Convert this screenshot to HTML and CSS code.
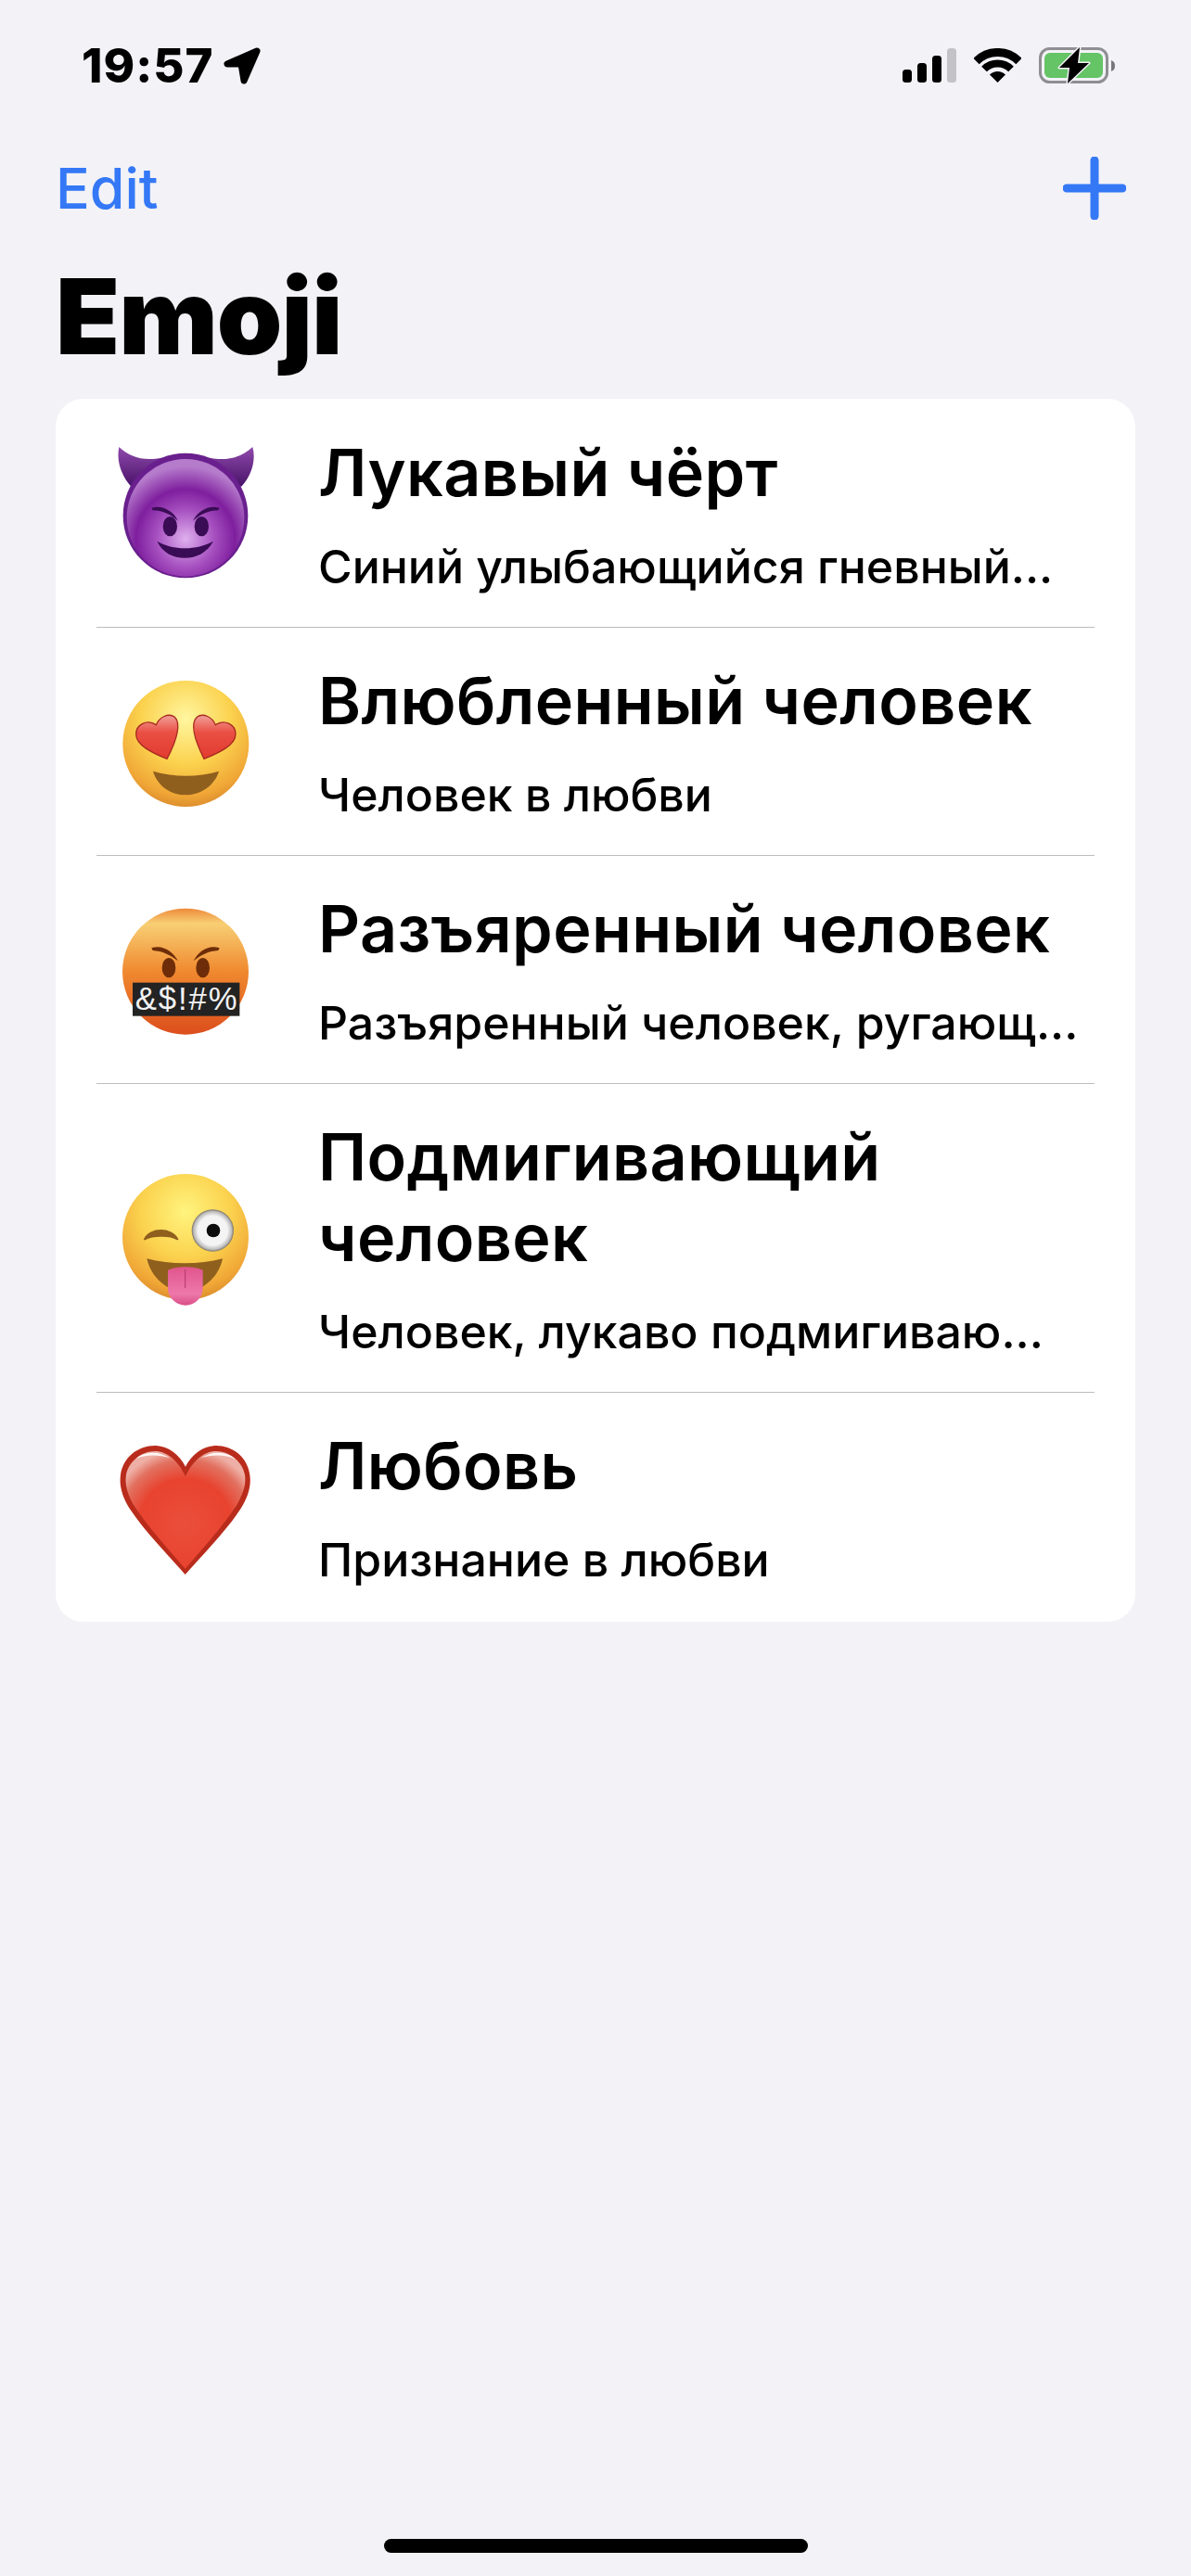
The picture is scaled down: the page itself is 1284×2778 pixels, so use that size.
FILE: index.html
```html
<!DOCTYPE html>
<html lang="en">
<head>
  <meta charset="UTF-8" />
  <title>Emoji</title>
  <link rel="stylesheet" href="styles.css">
</head>
<body>
  <div class="page">
    <div class="statusbar">
      <div class="status-left">
        <span class="time">19:57</span>
        <svg class="arrow" width="42" height="42" viewBox="0 0 42 42"><path d="M37 5 L5 19 H20 L23 37 Z" fill="#000" stroke="#000" stroke-width="7" stroke-linejoin="round"/></svg>
      </div>
      <div class="status-right">
        <svg width="58" height="38" viewBox="0 0 58 38">
          <rect x="0" y="23" width="10" height="14" rx="3.5" fill="#000"/>
          <rect x="16" y="16" width="10" height="21" rx="3.5" fill="#000"/>
          <rect x="32" y="8" width="10" height="29" rx="3.5" fill="#000"/>
          <rect x="48" y="0" width="10" height="37" rx="3.5" fill="#c2c2c7"/>
        </svg>
        <svg width="51" height="38" viewBox="0 0 51 38" fill="none" stroke="#000">
          <path d="M2.5 14 A32.5 32.5 0 0 1 48.5 14" stroke-width="9"/>
          <path d="M11 22.5 A20.5 20.5 0 0 1 40 22.5" stroke-width="8"/>
          <path d="M25.5 37 L17 28.5 A12 12 0 0 1 34 28.5 Z" fill="#000" stroke="none"/>
        </svg>
        <svg class="battery" width="82" height="42" viewBox="0 0 82 42">
          <rect x="1.5" y="2.5" width="72" height="36" rx="10" fill="none" stroke="#8e8e93" stroke-width="3"/>
          <rect x="6" y="7" width="63" height="27" rx="6" fill="#65c466"/>
          <path d="M78 15 C81 16 82 18 82 21 C82 24 81 26 78 27 Z" fill="#77777c"/>
          <path d="M44 1 L22 23 H33 L31 40 L54 18 H42 Z" fill="#000" stroke="#f2f2f7" stroke-width="3" stroke-linejoin="round" paint-order="stroke"/>
        </svg>
      </div>
    </div>

    <div class="navbar">
      <span class="edit">Edit</span>
      <svg width="68" height="68" viewBox="0 0 68 68"><path d="M34 4 V64 M4 34 H64" stroke="#3478f6" stroke-width="9" stroke-linecap="round"/></svg>
    </div>

    <h1 class="page-title">Emoji</h1>

    <div class="card">
      <div class="row">
        <svg class="emoji" viewBox="0 9 660 600">
          <defs>
            <linearGradient id="hornFill" x1="0" y1="0" x2="0" y2="1">
              <stop offset="0" stop-color="#8f4aac"/><stop offset="1" stop-color="#481268"/>
            </linearGradient>
            <radialGradient id="devilFace" cx="50%" cy="68%" r="62%">
              <stop offset="0" stop-color="#dfb0ee"/><stop offset=".4" stop-color="#a650c0"/><stop offset=".68" stop-color="#7f1f9e"/><stop offset="1" stop-color="#b67ccc"/>
            </radialGradient>
          </defs>
          <path d="M85 93 C120 125 160 140 225 128 L125 222 C95 190 75 140 85 93 Z" fill="url(#hornFill)"/>
          <path d="M517 93 C482 125 440 140 375 128 L480 222 C510 190 530 140 517 93 Z" fill="url(#hornFill)"/>
          <circle cx="300" cy="315" r="202" fill="#6a1f8e"/>
          <circle cx="300" cy="322" r="190" fill="url(#devilFace)"/>
          <path d="M190 290 C225 280 260 300 276 332 C250 310 225 298 194 298 Z" fill="#3a0c55"/>
          <path d="M410 290 C375 280 340 300 324 332 C350 310 375 298 406 298 Z" fill="#3a0c55"/>
          <ellipse cx="250" cy="350" rx="23" ry="32" fill="#3a0c55"/>
          <ellipse cx="352" cy="350" rx="23" ry="32" fill="#3a0c55"/>
          <path d="M208 398 C260 428 335 428 390 398 C370 435 335 452 298 452 C260 452 225 435 208 398 Z" fill="#3a0c55"/>
        </svg>
        <div class="row-text">
          <div class="row-title">Лукавый чёрт</div>
          <div class="row-sub">Синий улыбающийся гневный...</div>
        </div>
      </div>
      <div class="sep"></div>

      <div class="row">
        <svg class="emoji" viewBox="0 -30 660 600">
          <defs>
            <radialGradient id="yellowFace" cx="50%" cy="30%" r="72%">
              <stop offset="0" stop-color="#fff6a0"/><stop offset=".5" stop-color="#fbd24e"/><stop offset=".85" stop-color="#f0a636"/><stop offset="1" stop-color="#d98a2c"/>
            </radialGradient>
            <linearGradient id="eyeHeart" x1="0" y1="0" x2="0" y2="1">
              <stop offset="0" stop-color="#f0a09a"/><stop offset=".4" stop-color="#ea4e42"/><stop offset="1" stop-color="#e23b30"/>
            </linearGradient>
          </defs>
          <circle cx="301" cy="276" r="204" fill="url(#yellowFace)"/>
          <path d="M240 325 C190 305 140 280 140 245 C140 215 175 195 205 215 C215 190 245 175 265 190 C285 210 275 260 240 325 Z" fill="url(#eyeHeart)" stroke="#a82a20" stroke-width="4"/>
          <path d="M360 325 C410 305 462 280 462 245 C462 215 427 195 397 215 C387 190 357 175 337 190 C317 210 327 260 360 325 Z" fill="url(#eyeHeart)" stroke="#a82a20" stroke-width="4"/>
          <path d="M195 365 C265 385 340 385 408 365 C395 410 350 442 300 442 C250 442 208 410 195 365 Z" fill="#8f5f1e"/>
        </svg>
        <div class="row-text">
          <div class="row-title">Влюбленный человек</div>
          <div class="row-sub">Человек в любви</div>
        </div>
      </div>
      <div class="sep"></div>

      <div class="row">
        <svg class="emoji" viewBox="0 -39 660 600">
          <defs>
            <linearGradient id="angryFace" x1="0" y1="0" x2="0" y2="1">
              <stop offset="0" stop-color="#ee8a3a"/><stop offset=".12" stop-color="#f8cf74"/><stop offset=".5" stop-color="#f0892f"/><stop offset="1" stop-color="#dc4e1c"/>
            </linearGradient>
          </defs>
          <circle cx="300" cy="266" r="204" fill="url(#angryFace)"/>
          <path d="M190 190 C225 178 258 200 276 232 C250 212 225 200 194 198 Z" fill="#6e2d08"/>
          <path d="M410 190 C375 178 342 200 326 232 C350 212 375 200 406 198 Z" fill="#6e2d08"/>
          <ellipse cx="246" cy="254" rx="22" ry="32" fill="#6e2d08"/>
          <ellipse cx="356" cy="254" rx="22" ry="32" fill="#6e2d08"/>
          <rect x="129" y="302" width="346" height="108" fill="#232323"/>
          <text class="grawlix" x="302" y="391" text-anchor="middle" textLength="330" fill="#f2f2f2">&amp;$!#%</text>
        </svg>
        <div class="row-text">
          <div class="row-title">Разъяренный человек</div>
          <div class="row-sub">Разъяренный человек, ругающ...</div>
        </div>
      </div>
      <div class="sep"></div>

      <div class="row">
        <svg class="emoji" viewBox="0 -12 660 600">
          <defs>
            <radialGradient id="winkFace" cx="50%" cy="30%" r="72%">
              <stop offset="0" stop-color="#fff47e"/><stop offset=".5" stop-color="#fbd24e"/><stop offset=".85" stop-color="#f0a636"/><stop offset="1" stop-color="#d98a2c"/>
            </radialGradient>
            <radialGradient id="winkEye" cx="50%" cy="50%" r="50%">
              <stop offset=".7" stop-color="#f4f4f4"/><stop offset=".9" stop-color="#bdbdbd"/><stop offset="1" stop-color="#7c7468"/>
            </radialGradient>
            <linearGradient id="tongue" x1="0" y1="0" x2="0" y2="1">
              <stop offset="0" stop-color="#e0558c"/><stop offset=".7" stop-color="#ee78aa"/><stop offset="1" stop-color="#d94f88"/>
            </linearGradient>
          </defs>
          <circle cx="300" cy="285" r="204" fill="url(#winkFace)"/>
          <circle cx="388" cy="264" r="68" fill="url(#winkEye)"/>
          <circle cx="390" cy="264" r="22" fill="#0c0c0c"/>
          <path d="M168 292 C185 255 255 255 274 292 C250 278 195 278 168 292 Z" fill="#8f5f1e" stroke="#8f5f1e" stroke-width="6" stroke-linejoin="round"/>
          <path d="M175 355 C250 375 345 375 420 355 C408 415 355 462 298 462 C240 462 188 415 175 355 Z" fill="#8f5f1e"/>
          <path d="M243 392 C270 378 330 378 356 392 V450 C356 482 330 506 300 506 C270 506 243 482 243 450 Z" fill="url(#tongue)"/>
          <path d="M299 390 V450" stroke="#b5386c" stroke-width="3"/>
        </svg>
        <div class="row-text">
          <div class="row-title">Подмигивающий человек</div>
          <div class="row-sub">Человек, лукаво подмигиваю...</div>
        </div>
      </div>
      <div class="sep"></div>

      <div class="row">
        <svg class="emoji" viewBox="0 -12 660 600">
          <defs>
            <radialGradient id="heartFill" cx="50%" cy="62%" r="64%">
              <stop offset="0" stop-color="#ea4f3c"/><stop offset=".6" stop-color="#e8432f"/><stop offset=".85" stop-color="#e2705f"/><stop offset="1" stop-color="#eeb0a6"/>
            </radialGradient>
          </defs>
          <path d="M299 507 C240 440 170 370 120 295 C95 255 85 220 90 185 C98 125 150 88 205 90 C245 92 280 120 300 158 C320 120 355 92 395 90 C450 88 500 125 508 185 C513 220 503 255 478 295 C428 370 358 440 299 507 Z" fill="#b92c1c"/>
          <path d="M299 488 C245 425 180 355 132 282 C112 245 103 215 108 185 C116 140 160 106 205 108 C245 110 280 145 300 190 C320 145 355 110 395 108 C440 106 484 140 492 185 C497 215 486 245 466 282 C418 355 353 425 299 488 Z" fill="url(#heartFill)"/>
          <path d="M140 132 C165 108 215 106 250 130 C215 118 170 118 140 132 Z" fill="#fff" opacity=".9"/>
          <path d="M350 130 C385 106 435 108 462 134 C430 118 385 118 350 130 Z" fill="#fff" opacity=".9"/>
        </svg>
        <div class="row-text">
          <div class="row-title">Любовь</div>
          <div class="row-sub">Признание в любви</div>
        </div>
      </div>
    </div>

    <div class="home-indicator"></div>
  </div>
</body>
</html>
```

FILE: styles.css
```css
html, body {
  margin: 0;
  padding: 0;
}

body {
  background: #f2f2f7;
  font-family: Inter, 'Noto Sans', sans-serif;
  color: #000;
}

.page {
  display: flex;
  flex-direction: column;
  min-height: 2778px;
}

.statusbar {
  display: flex;
  justify-content: space-between;
  align-items: center;
  height: 142px;
  padding: 0 82px 0 88px;
}

.status-left {
  display: flex;
  align-items: center;
  gap: 10px;
}

.status-right {
  display: flex;
  align-items: center;
  gap: 19px;
}

.time {
  font-size: 51px;
  font-weight: 800;
  line-height: 60px;
  letter-spacing: 1px;
}

.navbar {
  display: flex;
  justify-content: space-between;
  align-items: center;
  height: 122px;
  padding: 0 70px 0 60px;
}

.edit {
  color: #3478f6;
  font-size: 61px;
  font-weight: 550;
}

.page-title {
  margin: 0;
  padding-left: 60px;
  height: 166px;
  font-size: 113px;
  font-weight: 900;
  line-height: 154px;
  letter-spacing: -1px;
}

.card {
  margin: 0 60px;
  padding: 1px 0 2px;
  background: #fff;
  border-radius: 30px;
  overflow: hidden;
}

.row {
  display: flex;
  align-items: center;
  gap: 23px;
  padding-left: 40px;
}

.emoji {
  flex: none;
  width: 220px;
  height: 200px;
}

.row-text {
  flex: 1;
  min-width: 0;
  padding: 35px 44px 34px 0;
}

.row-title {
  font-size: 70px;
  font-weight: 600;
  line-height: 87px;
  letter-spacing: 0.4px;
}

.row-sub {
  margin-top: 27px;
  font-size: 50px;
  font-weight: 520;
  line-height: 62px;
  white-space: nowrap;
}

.sep {
  height: 1px;
  margin: 0 44px;
  background: #bdbdc0;
}

.grawlix {
  font-family: 'Liberation Sans', sans-serif;
  font-size: 104px;
}

.home-indicator {
  width: 457px;
  height: 15px;
  margin: auto auto 25px;
  border-radius: 8px;
  background: #000;
}
```
